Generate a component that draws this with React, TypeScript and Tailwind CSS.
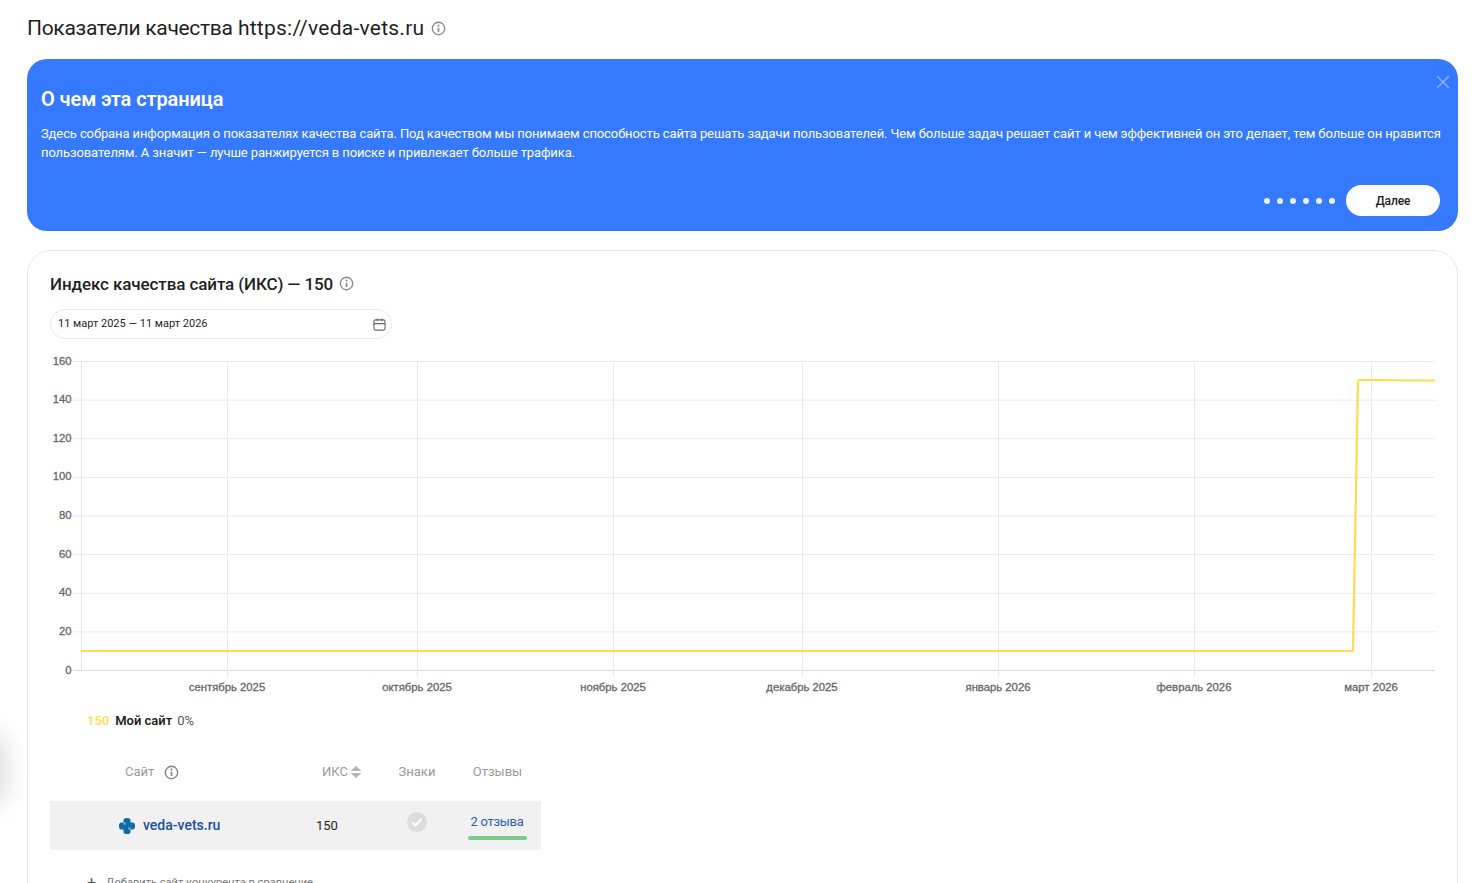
import { Fragment } from 'react';

const yTicks = [160, 140, 120, 100, 80, 60, 40, 20, 0];
const months = [
  { x: 227, name: 'сентябрь 2025' },
  { x: 417, name: 'октябрь 2025' },
  { x: 613, name: 'ноябрь 2025' },
  { x: 802, name: 'декабрь 2025' },
  { x: 998, name: 'январь 2026' },
  { x: 1194, name: 'февраль 2026' },
  { x: 1371, name: 'март 2026' },
];
const dots = [0, 1, 2, 3, 4, 5];

const InfoIcon = ({ className }: { className: string }) => (
  <svg viewBox="0 0 16 16" fill="none" className={className}>
    <circle cx="8" cy="8" r="6.6" stroke="currentColor" strokeWidth="1.5" />
    <circle cx="8" cy="4.9" r="1.1" fill="currentColor" />
    <path d="M8 7.2v4.4" stroke="currentColor" strokeWidth="1.8" />
  </svg>
);

const Chart = () => {
  // координаты заданы от левого края карточки с отступом, 50px слева и 350px сверху
  const yOf = (v: number) => 11 + ((160 - v) * 309) / 160;
  return (
    <svg width="1385" height="350" className="block" style={{ fontFamily: '"Liberation Sans", sans-serif' }}>
      {yTicks.map((t) => (
        <Fragment key={t}>
          <line x1="23" x2="1385" y1={yOf(t) + 0.5} y2={yOf(t) + 0.5} stroke={t === 0 ? '#d9d9d9' : '#e9e9e9'} />
          <text x="21.5" y={yOf(t) + 3.5} textAnchor="end" fontSize="11.3" fill="#666" stroke="#666" strokeWidth="0.3">
            {t}
          </text>
        </Fragment>
      ))}
      <line x1="31.5" x2="31.5" y1="11" y2="320" stroke="#e6e6e6" />
      {months.map((m) => (
        <Fragment key={m.name}>
          <line x1={m.x - 50 + 0.5} x2={m.x - 50 + 0.5} y1="11" y2="327" stroke="#e9e9e9" />
          <text x={m.x - 50} y="341" textAnchor="middle" fontSize="11.3" fill="#666" stroke="#666" strokeWidth="0.3">
            {m.name}
          </text>
        </Fragment>
      ))}
      <path
        d="M31 301H1301.5Q1303 301 1303 299.5L1308 31Q1308 30 1309.5 30L1385 30.5"
        fill="none"
        stroke="#ffdb4d"
        strokeWidth="2.2"
      />
    </svg>
  );
};

const App = () => {
  return (
    <div
      className="relative h-[883px] overflow-hidden bg-white pl-[27px] pr-[19px] text-[#1f1f1f]"
      style={{ fontFamily: 'Roboto, "Noto Sans", sans-serif' }}
    >
      <div className="pointer-events-none absolute left-[-40px] top-[730px] h-[80px] w-[50px] rounded-full bg-[#e6e6e6] blur-[10px]" />

      <div className="flex h-[59px] items-center gap-[7px] pb-[3px]">
        <h1 className="text-[21px] font-normal leading-6">
          <span className="tracking-[-0.3px]">Показатели качества</span>{' '}
          <span className="tracking-[0.25px]">https://veda-vets.ru</span>
        </h1>
        <InfoIcon className="h-[15px] w-[15px] text-[#8a8a8a]" />
      </div>

      <section className="relative h-[172px] rounded-[20px] bg-[#3579ff] pl-[14px] pr-[15px] pt-[28px] text-white">
        <svg viewBox="0 0 14 14" className="absolute right-[8px] top-[16px] h-[14px] w-[14px] text-[#85aeff]" fill="none">
          <path d="M1 1l12 12M13 1L1 13" stroke="currentColor" strokeWidth="1.6" />
        </svg>
        <h2 className="text-[20px] font-semibold leading-6 tracking-[-0.1px]">О чем эта страница</h2>
        <p className="mt-[13px] text-[13px] leading-[19px] tracking-[-0.105px]">
          Здесь собрана информация о показателях качества сайта. Под качеством мы понимаем способность сайта решать
          задачи пользователей. Чем больше задач решает сайт и чем эффективней он это делает, тем больше он нравится
          пользователям. А значит — лучше ранжируется в поиске и привлекает больше трафика.
        </p>
        <div className="absolute bottom-[15px] right-[18px] flex items-center">
          <div className="mr-[11px] flex gap-[7px]">
            {dots.map((d) => (
              <span key={d} className="h-[6px] w-[6px] rounded-full bg-white/90" />
            ))}
          </div>
          <button className="h-[31px] w-[94px] rounded-full bg-white text-[12px] font-medium tracking-[-0.15px] text-[#1f1f1f]">
            Далее
          </button>
        </div>
      </section>

      <section className="mt-[19px] h-[700px] rounded-[24px] border border-[#e6e6e6] pl-[22px] pr-[23px]">
        <div className="mt-[16px] flex h-[32px] items-center gap-[6px] pt-[1px]">
          <h2 className="text-[17px] font-medium leading-6 tracking-[-0.1px]">Индекс качества сайта (ИКС) — 150</h2>
          <InfoIcon className="h-[15px] w-[15px] text-[#8a8a8a]" />
        </div>
        <div className="mt-[10px] flex h-[30px] w-[342px] items-center justify-between rounded-full border border-[#ebebeb] pl-[7px] pr-[5px]">
          <span className="text-[11px]">11 март 2025 — 11 март 2026</span>
          <svg viewBox="0 0 14 14" fill="none" className="h-[13px] w-[13px] text-[#666]">
            <rect x="1" y="2" width="12" height="11" rx="2" stroke="currentColor" strokeWidth="1.2" />
            <path d="M1 6h12M4.5 0.5v3M9.5 0.5v3" stroke="currentColor" strokeWidth="1.2" />
          </svg>
        </div>

        <div className="mt-[11px]">
          <Chart />
        </div>

        <div className="ml-[37px] mt-[11px] flex h-[20px] items-center text-[13px]">
          <span className="font-medium text-[#ffdb4d]">150</span>
          <span className="ml-[6px] font-semibold">Мой сайт</span>
          <span className="ml-[5px] text-[#555]">0%</span>
        </div>

        <div className="mt-[20px] w-[491px]">
          <div className="grid h-[50px] grid-cols-[272px_63px_64px_92px] items-center pb-[8px] text-[13px] text-[#999]">
            <div className="flex items-center gap-[10px] pl-[75px]">
              <span>Сайт</span>
              <InfoIcon className="h-[15px] w-[15px] text-[#808080]" />
            </div>
            <div className="flex items-center gap-[2px]">
              <span>ИКС</span>
              <svg viewBox="0 0 12 12" className="h-[12px] w-[12px] text-[#b5b5b5]" fill="currentColor">
                <path d="M6 0l5.5 5H0.5zM6 12l5.5-5H0.5z" />
              </svg>
            </div>
            <div className="text-center">Знаки</div>
            <div className="pl-[5px] text-center">Отзывы</div>
          </div>
          <div className="grid h-[49px] grid-cols-[266px_77px_48px_100px] items-center bg-[#f1f1f1] text-[13px]">
            <div className="flex items-center gap-[8px] pl-[69px]">
              <svg viewBox="0 0 16 16" className="h-[16px] w-[16px]">
                <path
                  d="M4.5 2Q4.5 0 8 0t3.500 2V4.500H14Q16 4.500 16 8t-2 3.500H11.500V14Q11.500 16 8 16T4.500 14V11.500H2Q0 11.500 0 8t2-3.500H4.500z"
                  fill="#0f6aa8"
                />
                <circle cx="5.5" cy="5.500" r="1.300" fill="#6fb0dc" />
                <circle cx="10.500" cy="10.500" r="1.300" fill="#6fb0dc" />
              </svg>
              <span className="text-[14px] font-medium text-[#1a4fa0]">veda-vets.ru</span>
            </div>
            <div>150</div>
            <div className="flex justify-center pb-[8px]">
              <svg viewBox="0 0 20 20" className="h-[20px] w-[20px]">
                <circle cx="10" cy="10" r="10" fill="#dcdcdc" />
                <path d="M5.500 10.500l3 3 6-6.500" fill="none" stroke="#fff" strokeWidth="2" />
              </svg>
            </div>
            <div className="flex flex-col items-center pl-[12px]">
              <span className="text-[13px] leading-[20px] tracking-[-0.3px] text-[#2a5fa8]">2 отзыва</span>
              <span className="mt-[4px] h-[4px] w-[59px] rounded-full bg-[#7bc98f]" />
            </div>
          </div>
        </div>

        <div className="ml-[37px] mt-[25px] flex items-center gap-[10px] text-[11.100px] text-[#777]">
          <span className="text-[16px] leading-4 text-[#555]">+</span>
          <span>Добавить сайт конкурента в сравнение</span>
        </div>
      </section>
    </div>
  );
};

export default App;
